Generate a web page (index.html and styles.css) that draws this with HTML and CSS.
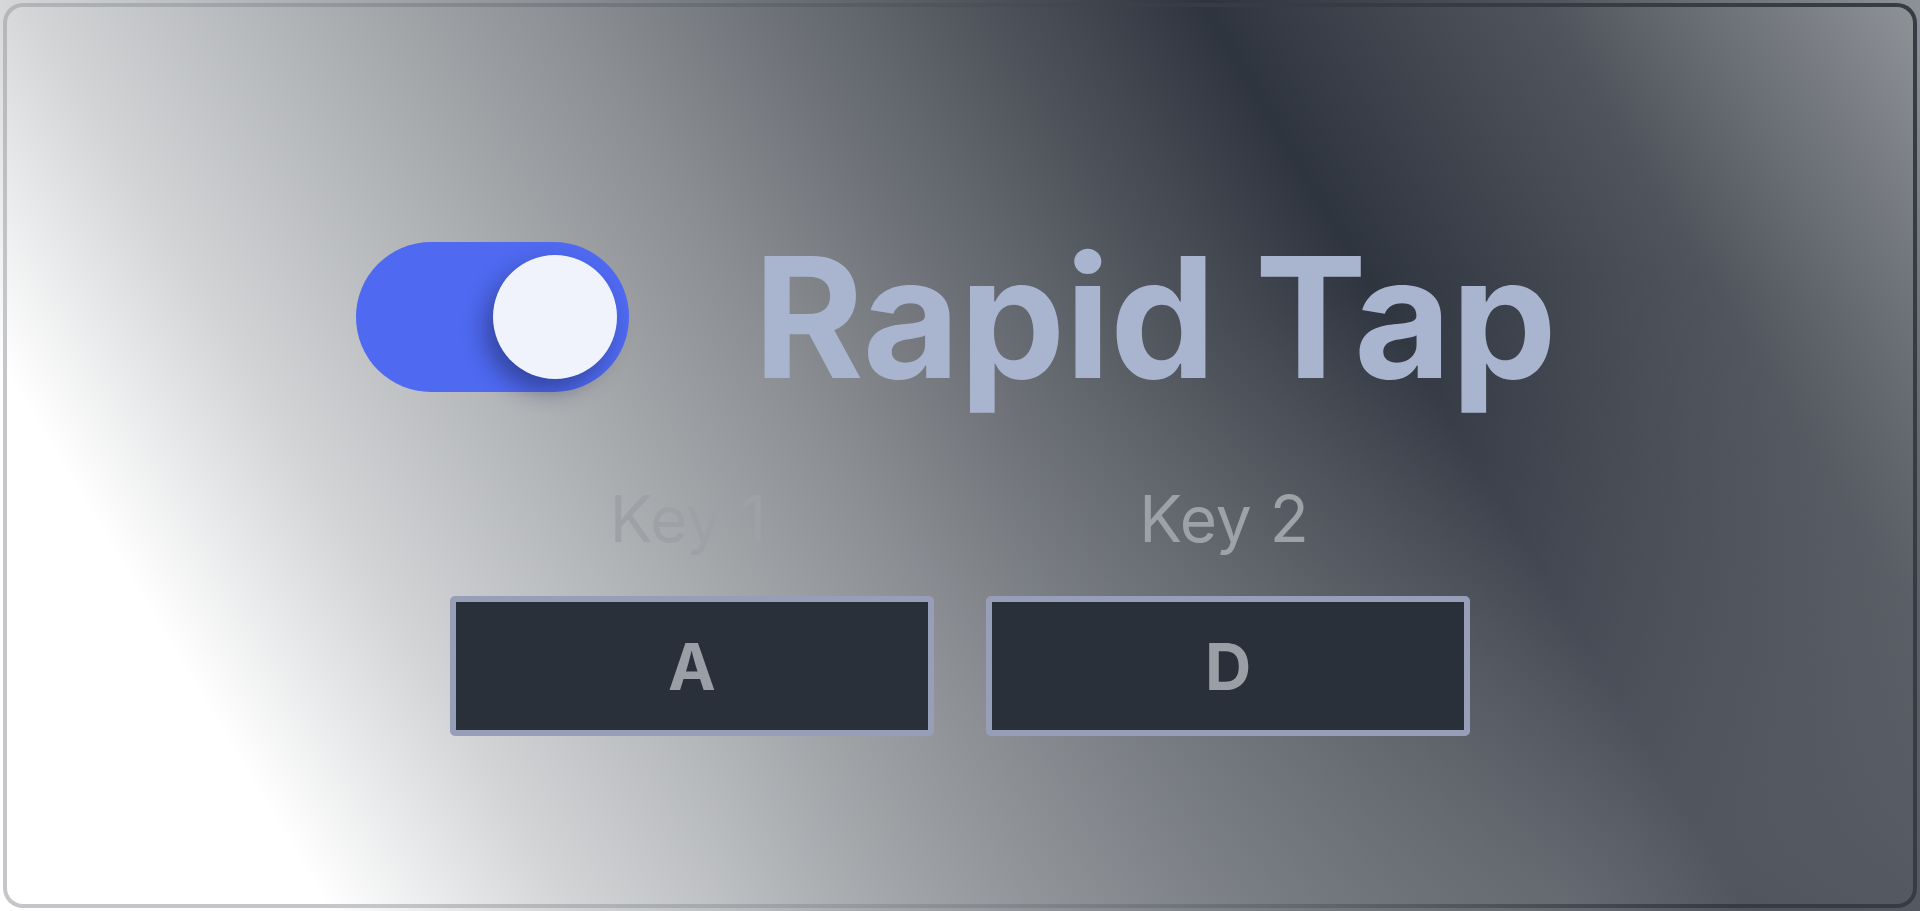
FILE: index.html
```html
<!DOCTYPE html>
<html lang="en">
<head>
<meta charset="utf-8">
<title>Rapid Tap</title>
<link rel="stylesheet" href="styles.css">
</head>
<body>
<main class="card">
  <section class="header-row">
    <div class="toggle" role="switch" aria-checked="true">
      <span class="toggle-knob"></span>
    </div>
    <h1 class="title">Rapid Tap</h1>
  </section>
  <section class="keys">
    <div class="key-field">
      <div class="key-label">Key 1</div>
      <div class="key-box">A</div>
    </div>
    <div class="key-field">
      <div class="key-label">Key 2</div>
      <div class="key-box">D</div>
    </div>
  </section>
</main>
</body>
</html>
```

FILE: styles.css
```css
html, body {
  margin: 0;
  padding: 0;
  width: 1920px;
  height: 911px;
  overflow: hidden;
}

body {
  font-family: Inter, "Liberation Sans", sans-serif;
  background:
    radial-gradient(ellipse 45% 70% at 82% 100%, rgba(130,135,142,0.5), rgba(130,135,142,0) 100%),
    linear-gradient(59deg, #ffffff 0%, #ffffff 13%, #d2d4d6 23%, #8b8e92 45%, #2f353f 71%, #50555d 85%, #8e9196 100%);
}

.card {
  box-sizing: border-box;
  margin: 3px;
  width: 1914px;
  height: 905px;
  border: 4px solid transparent;
  border-radius: 20px;
  background:
    radial-gradient(ellipse 45% 70% at 82% 100%, rgba(130,135,142,0.5), rgba(130,135,142,0) 100%) padding-box,
    linear-gradient(59deg, #ffffff 0%, #ffffff 13%, #d2d4d6 23%, #8b8e92 45%, #2f353f 71%, #50555d 85%, #8e9196 100%) padding-box,
    linear-gradient(59deg, #c4c6c9 0%, #c4c6c9 15%, #a3a6aa 30%, #6a6e75 50%, #363b44 70%, #363b44 100%) border-box;
  display: flex;
  flex-direction: column;
  align-items: center;
  padding-top: 226px;
}

.header-row {
  display: flex;
  align-items: center;
  gap: 125px;
  margin-right: 8px;
}

.toggle {
  box-sizing: border-box;
  width: 273px;
  height: 150px;
  border-radius: 75px;
  background: #4f69f0;
  display: flex;
  align-items: center;
  justify-content: flex-end;
  padding-right: 12px;
}

.toggle-knob {
  width: 124px;
  height: 124px;
  border-radius: 50%;
  background: #f0f3fb;
  box-shadow: -8px 12px 22px rgba(20, 28, 70, 0.45);
}

.title {
  margin: 0;
  font-size: 168px;
  line-height: 168px;
  font-weight: 700;
  color: #a9b4cf;
  letter-spacing: -0.5px;
}

.keys {
  display: grid;
  grid-template-columns: 484px 484px;
  column-gap: 52px;
  margin-top: 79px;
}

.key-field {
  display: flex;
  flex-direction: column;
  align-items: center;
}

.key-label {
  font-size: 64px;
  line-height: 77px;
  font-weight: 400;
  color: #9ea2a7;
  margin-right: 8px;
}

.key-box {
  box-sizing: border-box;
  margin-top: 39px;
  width: 484px;
  height: 140px;
  border: 6px solid #979fb8;
  border-radius: 5px;
  background: #29303a;
  display: flex;
  align-items: center;
  justify-content: center;
  font-size: 64px;
  font-weight: 700;
  color: #9a9ea5;
}
```
